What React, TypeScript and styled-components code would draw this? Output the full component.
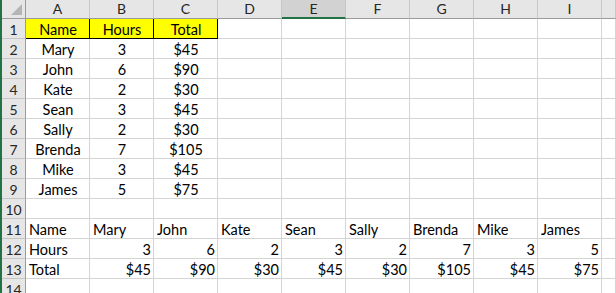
import * as React from 'react';
import styled, { createGlobalStyle, css } from 'styled-components';

const GlobalStyle = createGlobalStyle`
  html, body {
    margin: 0;
    padding: 0;
    background: #ffffff;
    overflow: hidden;
  }
`;

const columns = ['A', 'B', 'C', 'D', 'E', 'F', 'G', 'H', 'I', ''];

type Align = 'left' | 'center' | 'right';

interface CellData {
  text: string;
  align: Align;
  highlight?: boolean;
}

const people = [
  ['Mary', '3', '$45'],
  ['John', '6', '$90'],
  ['Kate', '2', '$30'],
  ['Sean', '3', '$45'],
  ['Sally', '2', '$30'],
  ['Brenda', '7', '$105'],
  ['Mike', '3', '$45'],
  ['James', '5', '$75'],
];

const buildRows = (): CellData[][] => {
  const rows: CellData[][] = [];
  rows.push(['Name', 'Hours', 'Total'].map(t => ({ text: t, align: 'center' as Align, highlight: true })));
  people.forEach(p => rows.push(p.map(t => ({ text: t, align: 'center' as Align }))));
  rows.push([]);
  rows.push([{ text: 'Name', align: 'left' }, ...people.map(p => ({ text: p[0], align: 'left' as Align }))]);
  rows.push([{ text: 'Hours', align: 'left' }, ...people.map(p => ({ text: p[1], align: 'right' as Align }))]);
  rows.push([{ text: 'Total', align: 'left' }, ...people.map(p => ({ text: p[2], align: 'right' as Align }))]);
  rows.push([]);
  return rows;
};

const Window = styled.div`
  border-left: 2px solid #217346;
  height: 293px;
  overflow: hidden;
  font-family: Lato, 'Liberation Sans', sans-serif;
  font-size: 14.5px;
  color: #000000;
`;

const Grid = styled.div`
  display: grid;
  grid-template-columns: 24px repeat(9, 64px) 1fr;
  grid-template-rows: 19px;
  grid-auto-rows: 20px;
`;

const Corner = styled.div`
  position: relative;
  background: #e6e6e6;
  border-right: 1px solid #9b9b9b;
  border-bottom: 1px solid #9b9b9b;

  &::after {
    content: '';
    position: absolute;
    right: 3px;
    bottom: 3px;
    width: 0;
    height: 0;
    border-left: 11px solid transparent;
    border-bottom: 11px solid #b5b5b5;
  }
`;

const ColHeader = styled.div<{ $selected?: boolean }>`
  background: ${p => (p.$selected ? '#d2d2d2' : '#e6e6e6')};
  border-right: 1px solid #c6c6c6;
  border-bottom: ${p => (p.$selected ? '2px solid #217346' : '1px solid #9b9b9b')};
  box-sizing: border-box;
  display: flex;
  align-items: center;
  justify-content: center;
  font-size: 14px;
  color: #262626;
  line-height: 1;
  padding-bottom: ${p => (p.$selected ? '0' : '1px')};
`;

const RowHeader = styled.div`
  background: #e6e6e6;
  border-right: 1px solid #9b9b9b;
  border-bottom: 1px solid #c6c6c6;
  box-sizing: border-box;
  display: flex;
  align-items: center;
  justify-content: center;
  padding-top: 1px;
  font-size: 14px;
  color: #262626;
`;

const Cell = styled.div<{ $align: Align; $highlight?: boolean }>`
  box-sizing: border-box;
  border-right: 1px solid #d4d4d4;
  border-bottom: 1px solid #d4d4d4;
  display: flex;
  align-items: center;
  padding: 2px 2px 0 3px;
  white-space: nowrap;
  overflow: hidden;
  justify-content: ${p => (p.$align === 'left' ? 'flex-start' : p.$align === 'right' ? 'flex-end' : 'center')};
  ${p =>
    p.$highlight &&
    css`
      background: #ffff00;
      border-right-color: #000000;
      border-bottom-color: #000000;
    `}
`;

const App: React.FC = () => {
  const rows = buildRows();
  return (
    <>
      <GlobalStyle />
      <Window>
        <Grid>
          <Corner />
          {columns.map((c, i) => (
            <ColHeader key={`h${i}`} $selected={c === 'E'}>
              {c}
            </ColHeader>
          ))}
          {rows.map((row, r) => (
            <React.Fragment key={`r${r}`}>
              <RowHeader>{r + 1}</RowHeader>
              {columns.map((_, c) => {
                const data = row[c];
                return (
                  <Cell key={`c${r}-${c}`} $align={data ? data.align : 'left'} $highlight={data?.highlight}>
                    {data ? data.text : ''}
                  </Cell>
                );
              })}
            </React.Fragment>
          ))}
        </Grid>
      </Window>
    </>
  );
};

export default App;
